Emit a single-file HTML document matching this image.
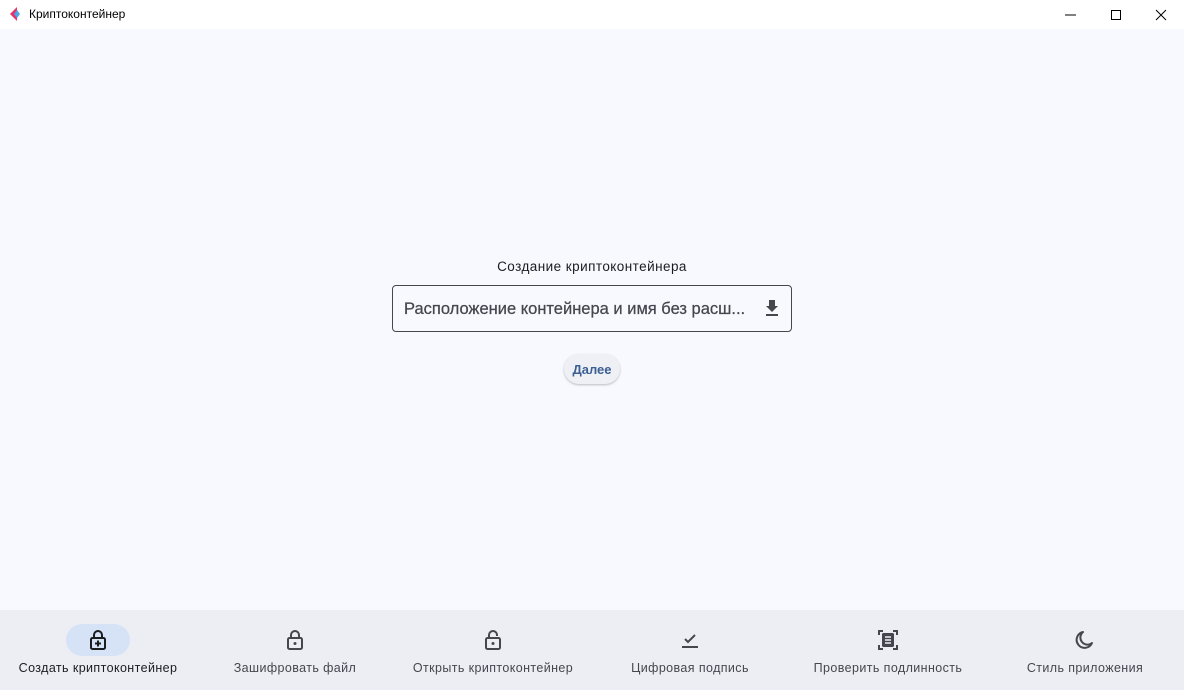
<!DOCTYPE html>
<html><head><meta charset="utf-8"><style>
*{margin:0;padding:0;box-sizing:border-box}
body{width:1184px;height:690px;overflow:hidden;font-family:"Liberation Sans","DejaVu Sans",sans-serif;background:#f8f9fe;position:relative}
.tb{position:absolute;left:0;top:0;width:1184px;height:29px;background:#fff;}
.tb .t{position:absolute;left:29px;top:7px;font-size:12px;color:#000}
.main{position:absolute;top:29px;left:0;width:1184px;height:581px;background:#f8f9fe}
.cap{position:absolute;top:259px;left:0;width:1184px;text-align:center;font-size:13.5px;letter-spacing:0.45px;color:#1a1c1e}
.inp{position:absolute;left:392px;top:285px;width:400px;height:47px;border:1px solid #44474e;border-radius:4px;background:#f8f9fe}
.inp span{position:absolute;left:11px;top:14px;font-size:16.5px;color:#44474e;-webkit-text-stroke:0.25px #44474e}
.btn{position:absolute;left:564px;top:354px;width:56px;height:30px;border-radius:15px;background:#eef0f6;box-shadow:0 1px 2px rgba(0,0,0,.25);font-size:13px;font-weight:bold;color:#3b5f91;text-align:center;line-height:31px}
.nav{position:absolute;top:610px;left:0;width:1184px;height:80px;background:#edeef3}
.it{position:absolute;top:0;width:198px;height:80px;margin-left:-99px;text-align:center}
.it .p{position:absolute;left:67px;top:14px;width:64px;height:32px;border-radius:16px}
.it svg{position:absolute;left:87px;top:18px}
.it .l{position:absolute;top:51px;left:0;width:198px;font-size:12.5px;letter-spacing:0.4px;color:#44474e}
</style></head><body>
<div class="tb">
<svg style="position:absolute;left:9px;top:6px" width="14" height="16" viewBox="0 0 14 16"><path d="M8 1 L1 8 L8 15 Z" fill="#e8326a"/><path d="M8 4 L5 8 L8 12 L11 8Z" fill="#48a8e8"/></svg>
<div class="t">Криптоконтейнер</div>
<svg style="position:absolute;left:1060px;top:9px" width="110" height="12"><line x1="5" y1="6" x2="16" y2="6" stroke="#000"/><rect x="51.5" y="1.5" width="9" height="9" fill="none" stroke="#000"/><path d="M96 1 L106 11 M106 1 L96 11" stroke="#000"/></svg>
</div>
<div class="main"></div>
<div class="cap">Создание криптоконтейнера</div>
<div class="inp"><span>Расположение контейнера и имя без расш...</span>
<svg style="position:absolute;left:371px;top:13px" width="16" height="18" viewBox="0 0 16 18"><path d="M5 1h6v6h3l-6 6-6-6h3z" fill="#44474e"/><rect x="2" y="15" width="12" height="2" fill="#44474e"/></svg></div>
<div class="btn">Далее</div>
<div class="nav">
<div class="it" style="left:98px"><div class="p" style="background:#d6e3f7"></div><svg width="24" height="24" viewBox="0 0 24 24"><path d="M8 10V7a4 4 0 0 1 8 0v3" fill="none" stroke="#1a1c1e" stroke-width="2"/><rect x="5" y="10" width="14" height="11" rx="1.5" fill="none" stroke="#1a1c1e" stroke-width="2"/><path d="M12 12.5v6M9 15.5h6" stroke="#1a1c1e" stroke-width="2"/></svg><div class="l" style="color:#1a1c1e">Создать криптоконтейнер</div></div>
<div class="it" style="left:295px"><svg width="24" height="24" viewBox="0 0 24 24"><path d="M8 10V7a4 4 0 0 1 8 0v3" fill="none" stroke="#44474e" stroke-width="2"/><rect x="5" y="10" width="14" height="11" rx="1.5" fill="none" stroke="#44474e" stroke-width="2"/><circle cx="12" cy="15.5" r="1.5" fill="#44474e"/></svg><div class="l">Зашифровать файл</div></div>
<div class="it" style="left:493px"><svg width="24" height="24" viewBox="0 0 24 24"><path d="M8 10V7a4 4 0 0 1 8 0v1" fill="none" stroke="#44474e" stroke-width="2"/><rect x="5" y="10" width="14" height="11" rx="1.5" fill="none" stroke="#44474e" stroke-width="2"/><circle cx="12" cy="15.5" r="1.5" fill="#44474e"/></svg><div class="l">Открыть криптоконтейнер</div></div>
<div class="it" style="left:690px"><svg width="24" height="24" viewBox="0 0 24 24"><path d="M7 11l3 3 7-7" fill="none" stroke="#44474e" stroke-width="2"/><rect x="4" y="18" width="16" height="2" fill="#44474e"/></svg><div class="l">Цифровая подпись</div></div>
<div class="it" style="left:888px"><svg width="24" height="24" viewBox="0 0 24 24"><path d="M3 7V3h4M17 3h4v4M21 17v4h-4M7 21H3v-4" fill="none" stroke="#44474e" stroke-width="2"/><rect x="6" y="5" width="12" height="14" rx="1.5" fill="#44474e"/><path d="M9 9h6M9 12h6M9 15h6" stroke="#edeef3" stroke-width="1.5"/></svg><div class="l">Проверить подлинность</div></div>
<div class="it" style="left:1085px"><svg width="24" height="24" viewBox="0 0 24 24"><path d="M10 4a8 8 0 1 0 9 11A7 7 0 0 1 10 4z" fill="none" stroke="#44474e" stroke-width="2" stroke-linejoin="round"/></svg><div class="l">Стиль приложения</div></div>
</div>
</body></html>
